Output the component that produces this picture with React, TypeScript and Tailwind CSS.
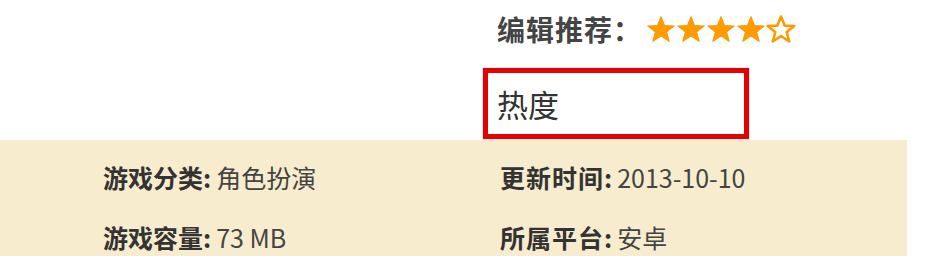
import React from "react";

const Star = ({ filled }: { filled: boolean }) => (
  <svg width="30" height="28" viewBox="0 0 30 28" className="block">
    <polygon
      points="15,1.5 18.6,10.6 28.3,11 20.7,17.1 23.3,26.5 15,21.1 6.7,26.5 9.3,17.1 1.7,11 11.4,10.6"
      fill={filled ? "#ff9a00" : "#ffffff"}
      stroke="#ff9a00"
      strokeWidth={filled ? 1 : 2.6}
      strokeLinejoin="round"
    />
  </svg>
);

export default function App() {
  const font = { fontFamily: '"Noto Sans CJK SC", "Noto Sans", sans-serif' };
  return (
    <div className="w-[934px] h-[270px] bg-white overflow-hidden" style={font}>
      <div className="flex items-center pl-[497px] pt-[12px] h-[46px]">
        <span className="text-[28px] leading-[34px] font-bold text-[#444] tracking-[1px]">编辑推荐：</span>
        <div className="flex ml-[4px]">
          <Star filled />
          <Star filled />
          <Star filled />
          <Star filled />
          <Star filled={false} />
        </div>
      </div>
      <div className="ml-[483px] mt-[22px] w-[266px] h-[71px] border-[5px] border-[#e60000] bg-white flex items-center pl-[9px] shadow-[0_0_0_1px_#d8f0f6]">
        <span className="text-[31px] leading-[36px] text-[#333]">热度</span>
      </div>
      <div className="mt-[1px] w-[907px] h-[116px] bg-[#f8ecce] pl-[103px] pt-[22px]">
        <div className="grid grid-cols-[397px_auto] gap-y-[30px] text-[25px] leading-[30px]">
          <div className="text-[#333]">
            <span className="font-bold">游戏分类:</span>
            <span className="ml-[5px] text-[#444]">角色扮演</span>
          </div>
          <div className="text-[#333]">
            <span className="font-bold tracking-[1px]">更新时间:</span>
            <span className="ml-[4px] text-[#444]">2013-10-10</span>
          </div>
          <div className="text-[#333]">
            <span className="font-bold">游戏容量:</span>
            <span className="ml-[5px] text-[#444]">73 MB</span>
          </div>
          <div className="text-[#333]">
            <span className="font-bold tracking-[1px]">所属平台:</span>
            <span className="ml-[4px] text-[#444]">安卓</span>
          </div>
        </div>
      </div>
    </div>
  );
}
